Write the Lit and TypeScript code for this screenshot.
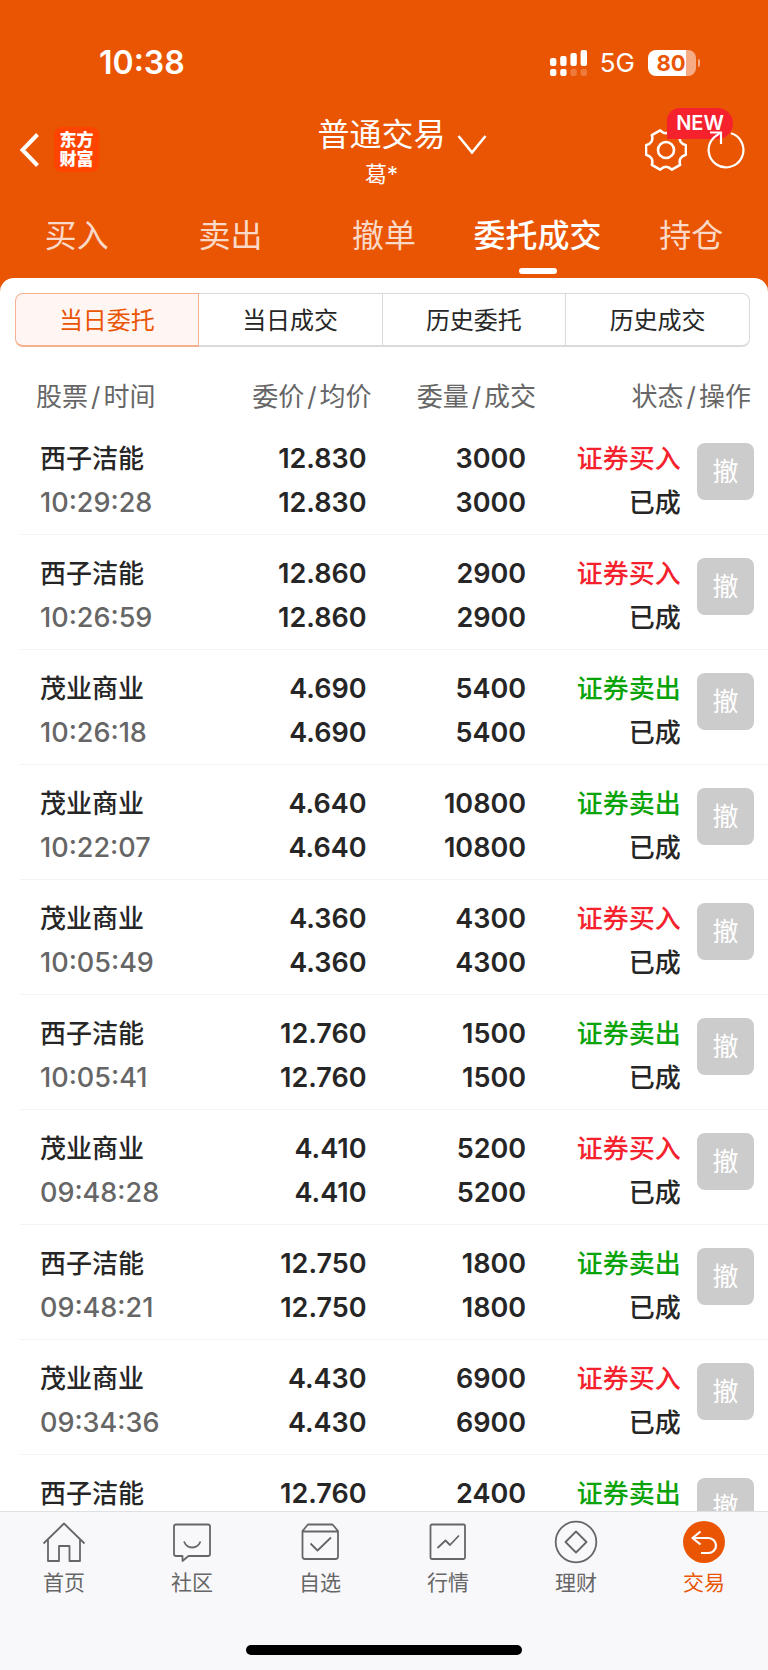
import { LitElement, html, css, svg, nothing } from "lit";
import { customElement, property, state } from "lit/decorators.js";
import { classMap } from "lit/directives/class-map.js";

type Side = "buy" | "sell";

interface Order {
  name: string;
  price: string;
  volume: string;
  side: Side;
  time?: string;
}

const order = (name: string, price: string, volume: string, side: Side, time?: string): Order => ({
  name,
  price,
  volume,
  side,
  time,
});

const ORDERS: Order[] = [
  order("西子洁能", "12.830", "3000", "buy", "10:29:28"),
  order("西子洁能", "12.860", "2900", "buy", "10:26:59"),
  order("茂业商业", "4.690", "5400", "sell", "10:26:18"),
  order("茂业商业", "4.640", "10800", "sell", "10:22:07"),
  order("茂业商业", "4.360", "4300", "buy", "10:05:49"),
  order("西子洁能", "12.760", "1500", "sell", "10:05:41"),
  order("茂业商业", "4.410", "5200", "buy", "09:48:28"),
  order("西子洁能", "12.750", "1800", "sell", "09:48:21"),
  order("茂业商业", "4.430", "6900", "buy", "09:34:36"),
  order("西子洁能", "12.760", "2400", "sell"),
];

const SIDE_LABEL: Record<Side, string> = { buy: "证券买入", sell: "证券卖出" };

@customElement("status-bar")
class StatusBar extends LitElement {
  static styles = css`
    :host {
      display: flex;
      align-items: center;
      justify-content: space-between;
      height: 28px;
      padding: 49px 68px 0 99px;
      color: #fff;
    }
    .clock {
      font-size: 32px;
      line-height: 28px;
      font-weight: 600;
    }
    .right {
      display: flex;
      align-items: center;
      gap: 13px;
    }
    .network {
      font-size: 26px;
      line-height: 28px;
    }
    .battery {
      display: flex;
      align-items: center;
      gap: 2px;
    }
    .cell {
      box-sizing: border-box;
      width: 48px;
      height: 26px;
      padding-right: 2px;
      border-radius: 8px;
      background: linear-gradient(to right, #fff 80%, #f5ab84 80%);
      color: #ea5504;
      font-size: 22px;
      line-height: 26px;
      font-weight: 700;
      text-align: center;
    }
    .nub {
      width: 2px;
      height: 8px;
      border-radius: 0 2px 2px 0;
      background: #f5ab84;
    }
  `;

  render() {
    const bars = [8, 10, 13, 16];
    return html`
      <span class="clock">10:38</span>
      <div class="right">
        <svg width="37" height="26" viewBox="0 0 37 26" fill="#fff" aria-hidden="true">
          ${bars.map(
            (h, i) => svg`
              <rect x=${i * 10.2} y=${16 - h} width="6.4" height=${h} rx="2"></rect>
              <rect x=${i * 10.2} y="19" width="6.4" height="7" rx="2" opacity=${i < 2 ? 1 : 0.22}></rect>`
          )}
        </svg>
        <span class="network">5G</span>
        <div class="battery"><span class="cell">80</span><span class="nub"></span></div>
      </div>
    `;
  }
}

@customElement("trade-header")
class TradeHeader extends LitElement {
  static styles = css`
    :host {
      display: grid;
      grid-template-columns: 1fr auto 1fr;
      align-items: start;
      padding: 37px 23px 0 18px;
      color: #fff;
    }
    button {
      display: block;
      padding: 0;
      border: 0;
      background: none;
      color: inherit;
      font: inherit;
    }
    svg {
      display: block;
    }
    .left {
      display: flex;
      align-items: center;
      gap: 14px;
      padding-top: 13px;
    }
    .logo {
      display: grid;
      align-content: center;
      justify-content: center;
      width: 45px;
      height: 45px;
      border-radius: 8px;
      background: #ff4400;
      font-size: 17px;
      line-height: 19px;
      font-weight: 900;
    }
    .title {
      display: grid;
      grid-template-columns: 28px auto 28px;
      column-gap: 11px;
      align-items: center;
      text-align: center;
    }
    .name {
      grid-column: 2;
      margin: 0;
      font-size: 32px;
      line-height: 42px;
      font-weight: 400;
    }
    .arrow {
      padding-top: 20px;
    }
    .user {
      grid-column: 1 / -1;
      font-size: 22px;
      line-height: 36px;
    }
    .actions {
      display: flex;
      justify-content: flex-end;
      gap: 20px;
      padding-top: 15px;
    }
    .settings {
      position: relative;
    }
    .badge {
      position: absolute;
      left: 22px;
      top: -21px;
      width: 66px;
      height: 31px;
      border-radius: 13px 16px 16px 0;
      background: #f5222d;
      font-size: 20px;
      line-height: 31px;
      font-weight: 600;
      text-align: center;
    }
    .refresh {
      position: relative;
    }
  `;

  render() {
    return html`
      <div class="left">
        <button aria-label="返回">
          <svg width="22" height="36" viewBox="0 0 22 36" fill="none" stroke="#fff" stroke-width="4">
            <path d="M19.500 2.500 4.500 18 19.500 33.500"></path>
          </svg>
        </button>
        <span class="logo"><span>东方</span><span>财富</span></span>
      </div>
      <div class="title">
        <h1 class="name">普通交易</h1>
        <button class="arrow" aria-label="切换账户">
          <svg width="30" height="20" viewBox="0 0 30 20" fill="none" stroke="#fff" stroke-width="2.6">
            <path d="M1.500 1 15 17.500 28.500 1"></path>
          </svg>
        </button>
        <span class="user">葛*</span>
      </div>
      <div class="actions">
        <button class="settings" aria-label="设置">
          <svg width="42" height="42" viewBox="-22 -22 44 44" fill="none" stroke="#fff" stroke-width="2.7" stroke-linejoin="round">
            <path
              d="M20.900-5V5Q12.500 7.200 14.800 15.600L6.100 20.600Q0 14.400-6.100 20.600L-14.800 15.600Q-12.500 7.200-20.900 5V-5Q-12.500-7.200-14.800-15.600L-6.100-20.600Q0-14.400 6.100-20.600L14.800-15.600Q12.500-7.200 20.900-5Z"
            ></path>
            <circle r="8.400"></circle>
          </svg>
          <span class="badge">NEW</span>
        </button>
        <button class="refresh" aria-label="刷新">
          <svg width="38" height="42" viewBox="-19 -21 38 42" fill="none" stroke="#fff" stroke-width="2.200">
            <path d="M5-16.700A17.400 17.400 0 1 1-12.500-12.100L-5.500-17.500"></path>
            <path d="M-16-17.500H-5V-6"></path>
          </svg>
        </button>
      </div>
    `;
  }
}

@customElement("trade-tabs")
class TradeTabs extends LitElement {
  static styles = css`
    :host {
      display: block;
      padding-top: 20px;
    }
    .tabs {
      display: grid;
      grid-template-columns: repeat(5, 1fr);
    }
    .tab {
      display: grid;
      justify-items: center;
      gap: 8px;
      padding: 0 0 4px;
      border: 0;
      background: none;
      color: rgba(255, 255, 255, 0.78);
      font: inherit;
      font-size: 32px;
      line-height: 48px;
      white-space: nowrap;
    }
    .tab::after {
      content: "";
      width: 38px;
      height: 6px;
      border-radius: 3px;
    }
    .active {
      color: #fff;
      font-weight: 500;
    }
    .active::after {
      background: #fff;
    }
  `;

  @state() private current = 3;

  render() {
    return html`<nav class="tabs">
      ${["买入", "卖出", "撤单", "委托成交", "持仓"].map(
        (label, i) => html`<button
          class=${classMap({ tab: true, active: i === this.current })}
          @click=${() => (this.current = i)}
        >
          ${label}
        </button>`
      )}
    </nav>`;
  }
}

@customElement("range-switch")
class RangeSwitch extends LitElement {
  static styles = css`
    :host {
      display: block;
      padding: 15px 18px 0 15px;
    }
    .group {
      display: grid;
      grid-template-columns: repeat(4, 1fr);
    }
    .item {
      height: 54px;
      padding: 3px 0 0;
      border: 1px solid #d9dade;
      border-bottom-width: 2px;
      border-left-width: 0;
      background: #fff;
      color: #262626;
      font: inherit;
      font-size: 24px;
      line-height: 36px;
    }
    .item:first-child {
      border-left-width: 1px;
      border-radius: 8px 0 0 8px;
    }
    .item:last-child {
      border-radius: 0 8px 8px 0;
    }
    .item.active {
      border-color: #f5b090;
      background: #fff6f3;
      color: #ea5504;
    }
  `;

  @state() private current = 0;

  render() {
    return html`<div class="group">
      ${["当日委托", "当日成交", "历史委托", "历史成交"].map(
        (label, i) => html`<button
          class=${classMap({ item: true, active: i === this.current })}
          @click=${() => (this.current = i)}
        >
          ${label}
        </button>`
      )}
    </div>`;
  }
}

@customElement("order-table")
class OrderTable extends LitElement {
  static styles = css`
    :host {
      display: block;
      padding: 26px 0 0 20px;
    }
    table {
      width: 100%;
      border-spacing: 0;
      table-layout: fixed;
      color: #262626;
      font-size: 26px;
      font-weight: 500;
    }
    .c-name {
      width: 24%;
    }
    .c-price {
      width: 23%;
    }
    .c-volume {
      width: 22%;
    }
    .c-state {
      width: 20%;
    }
    .c-action {
      width: 11%;
    }
    th {
      padding: 0;
      color: #666;
      font-weight: 400;
      line-height: 47px;
      text-align: right;
      white-space: nowrap;
    }
    th:first-child {
      padding-left: 16px;
      text-align: left;
    }
    th:last-child {
      padding-right: 17px;
    }
    .slash {
      margin: 0 3px;
    }
    td {
      padding: 17px 0 9px;
      border-bottom: 1px solid #f3f3f4;
      text-align: right;
      vertical-align: top;
    }
    .line {
      display: block;
      line-height: 44px;
      white-space: nowrap;
    }
    .name {
      padding-left: 20px;
      text-align: left;
    }
    .time {
      color: #666;
      font-size: 27px;
    }
    .price {
      padding-right: 5px;
      font-size: 27px;
      font-weight: 600;
    }
    .volume {
      padding-right: 10px;
      font-size: 27px;
      font-weight: 600;
    }
    .state {
      padding-right: 5px;
    }
    .buy {
      color: #f5222d;
    }
    .sell {
      color: #0aa30a;
    }
    .action {
      padding: 23px 14px 0 0;
    }
    .cancel {
      width: 57px;
      height: 57px;
      padding: 1px 0 0;
      border: 0;
      border-radius: 8px;
      background: #ccc;
      color: #fff;
      font: inherit;
      font-size: 26px;
      font-weight: 400;
      line-height: 56px;
      vertical-align: top;
    }
  `;

  @property({ attribute: false }) orders: Order[] = [];

  private heading(a: string, b: string) {
    return html`${a}<span class="slash">/</span>${b}`;
  }

  private row(o: Order) {
    const second = (text: string, muted = false) =>
      o.time ? html`<span class=${classMap({ line: true, time: muted })}>${text}</span>` : nothing;
    return html`<tr>
      <td class="name"><span class="line">${o.name}</span>${second(o.time ?? "", true)}</td>
      <td class="price"><span class="line">${o.price}</span>${second(o.price)}</td>
      <td class="volume"><span class="line">${o.volume}</span>${second(o.volume)}</td>
      <td class="state">
        <span class=${classMap({ line: true, [o.side]: true })}>${SIDE_LABEL[o.side]}</span>${second("已成")}
      </td>
      <td class="action"><button class="cancel">撤</button></td>
    </tr>`;
  }

  render() {
    return html`<table>
      <colgroup>
        <col class="c-name" />
        <col class="c-price" />
        <col class="c-volume" />
        <col class="c-state" />
        <col class="c-action" />
      </colgroup>
      <thead>
        <tr>
          <th scope="col">${this.heading("股票", "时间")}</th>
          <th scope="col">${this.heading("委价", "均价")}</th>
          <th scope="col">${this.heading("委量", "成交")}</th>
          <th scope="col" colspan="2">${this.heading("状态", "操作")}</th>
        </tr>
      </thead>
      <tbody>
        ${this.orders.map((o) => this.row(o))}
      </tbody>
    </table>`;
  }
}

const NAV = [
  {
    label: "首页",
    icon: svg`<path d="M1.500 23.500 22 3.500 42.500 23.500M6 19.500V41H17V26H27.500V41H38V19.500"></path>`,
  },
  {
    label: "社区",
    icon: svg`<path d="M6 4.500H38Q40 4.500 40 6.500V34Q40 36 38 36H18.500L12.500 41V36H6Q4 36 4 34V6.500Q4 4.500 6 4.500Z"></path><path d="M14 21.500Q16.500 27.500 22.200 27.500T30.500 21.500"></path>`,
  },
  {
    label: "自选",
    icon: svg`<path d="M10 4.500H34.500L40 11V36.500Q40 39 37.500 39H7Q4.500 39 4.500 36.500V11ZM4.500 11.500H40M12.500 23.500 19.500 30.500 33 17.500"></path>`,
  },
  {
    label: "行情",
    icon: svg`<rect x="4.500" y="4.500" width="34.500" height="34.500" rx="1.500"></rect><path d="M11.500 28 19.500 20.500 24 25 33 15.500"></path>`,
  },
  {
    label: "理财",
    icon: svg`<circle cx="22" cy="22" r="20.300"></circle><path d="M22 11.500 32.500 22 22 32.500 11.500 22Z"></path>`,
  },
  {
    label: "交易",
    icon: svg`<circle cx="22" cy="22" r="21" fill="#ea5504" stroke="none"></circle><path stroke="#fff" stroke-width="2.200" d="M18.500 11.500 10.500 18 18.500 24.500M11 18H26.500A7.500 7.500 0 0 1 26.500 33H19"></path>`,
  },
];

@customElement("bottom-nav")
class BottomNav extends LitElement {
  static styles = css`
    :host {
      display: block;
      border-top: 1px solid #dfe0e4;
      background: #f8f8fb;
    }
    .items {
      display: grid;
      grid-template-columns: repeat(6, 1fr);
      padding-top: 8px;
    }
    .item {
      display: grid;
      justify-items: center;
      gap: 4px;
      color: #666;
      font-size: 21px;
      line-height: 30px;
      text-decoration: none;
    }
    .active {
      color: #ea5504;
    }
    .home {
      width: 36%;
      height: 10px;
      margin: 47px auto 15px;
      border-radius: 5px;
      background: #000;
    }
  `;

  render() {
    return html`
      <nav class="items">
        ${NAV.map(
          (n, i) => html`<a class=${classMap({ item: true, active: i === 5 })} href="#">
            <svg width="44" height="44" viewBox="0 0 44 44" fill="none" stroke="#666" stroke-width="1.800" stroke-linejoin="round">
              ${n.icon}
            </svg>
            <span>${n.label}</span>
          </a>`
        )}
      </nav>
      <div class="home"></div>
    `;
  }
}

@customElement("app-root")
class AppRoot extends LitElement {
  static styles = css`
    :host {
      display: flex;
      flex-direction: column;
      height: 100vh;
      overflow: hidden;
      background: #ea5504;
      font-family: Inter, "Noto Sans CJK SC", sans-serif;
    }
    .panel {
      flex: 1;
      min-height: 0;
      overflow: hidden;
      border-radius: 14px 14px 0 0;
      background: #fff;
    }
  `;

  render() {
    return html`
      <status-bar></status-bar>
      <trade-header></trade-header>
      <trade-tabs></trade-tabs>
      <main class="panel">
        <range-switch></range-switch>
        <order-table .orders=${ORDERS}></order-table>
      </main>
      <bottom-nav></bottom-nav>
    `;
  }
}
